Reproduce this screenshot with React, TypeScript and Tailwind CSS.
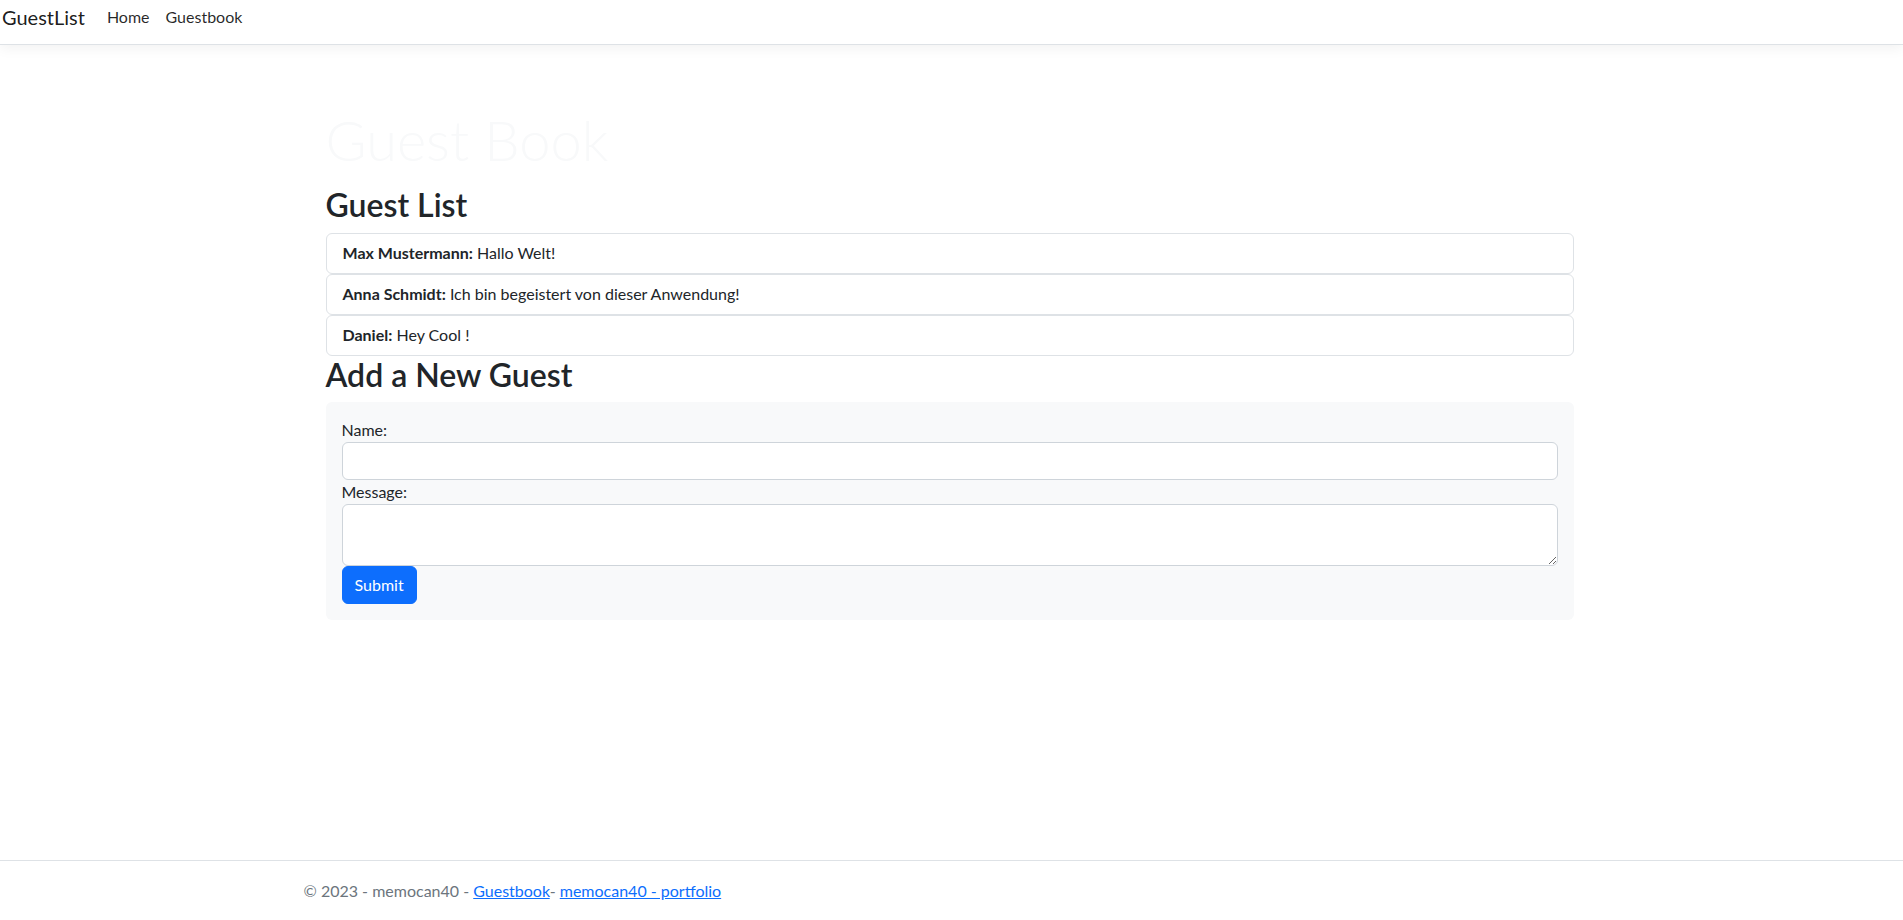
const guests = [
  { name: 'Max Mustermann', message: 'Hallo Welt!' },
  { name: 'Anna Schmidt', message: 'Ich bin begeistert von dieser Anwendung!' },
  { name: 'Daniel', message: 'Hey Cool !' },
];

export default function App() {
  return (
    <div
      className="min-h-screen flex flex-col bg-white text-[#212529] text-base leading-6"
      style={{ fontFamily: 'Lato, "Open Sans", sans-serif' }}
    >
      <header className="h-[45px] border-b border-[#dee2e6] bg-white shadow-[0_4px_12px_rgba(0,0,0,0.05)]">
        <nav className="h-[34px] flex items-center pl-[2px]">
          <a href="#" className="text-xl leading-[30px] text-[rgba(0,0,0,0.9)] mr-[14px]">
            GuestList
          </a>
          <a href="#" className="px-2 text-[rgba(0,0,0,0.85)]">
            Home
          </a>
          <a href="#" className="px-2 text-[rgba(0,0,0,0.85)]">
            Guestbook
          </a>
        </nav>
      </header>

      <div className="w-[1320px] mx-auto px-3">
        <main className="pl-[22px] pr-[26px] pt-[61px] pb-4">
          <h1 className="text-[56px] leading-[1.2] font-light text-[#f8f9fa] mb-[13px]">Guest Book</h1>

          <h2 className="text-[32px] leading-[1.2] font-semibold mb-2">Guest List</h2>
          <div>
            {guests.map((g, i) => (
              <ul key={i}>
                <li className="h-[41px] flex items-center px-4 border border-[#dee2e6] rounded-[6px]">
                  <span>
                    <strong className="font-bold">{g.name}:</strong> {g.message}
                  </span>
                </li>
              </ul>
            ))}
          </div>

          <h2 className="text-[32px] leading-[1.2] font-semibold mb-2">Add a New Guest</h2>
          <form className="bg-[#f8f9fa] rounded-[6px] p-4" onSubmit={(e) => e.preventDefault()}>
            <label className="block">Name:</label>
            <input
              type="text"
              className="block w-full h-[38px] bg-white border border-[#ced4da] rounded-[6px] px-3"
            />
            <label className="block">Message:</label>
            <textarea className="block w-full h-[62px] bg-white border border-[#ced4da] rounded-[6px] px-3 py-1.5" />
            <button
              type="submit"
              className="h-[38px] px-3 bg-[#0d6efd] text-white rounded-[6px] border border-[#0d6efd]"
            >
              Submit
            </button>
          </form>
        </main>
      </div>

      <footer className="mt-auto border-t border-[#dee2e6] h-[60px] text-[#6c757d] whitespace-nowrap">
        <div className="w-[1320px] mx-auto px-3 leading-[60px]">
          © 2023 - memocan40 -{' '}
          <a href="#" className="text-[#0d6efd] underline">
            Guestbook
          </a>
          -{' '}
          <a href="#" className="text-[#0d6efd] underline">
            memocan40 - portfolio
          </a>
        </div>
      </footer>
    </div>
  );
}
